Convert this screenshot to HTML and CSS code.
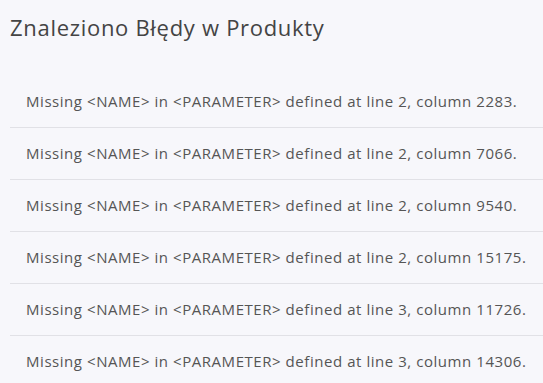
FILE: index.html
```html
<!DOCTYPE html>
<html lang="pl">
<head>
  <meta charset="UTF-8">
  <title>Znaleziono Błędy w Produkty</title>
  <link rel="stylesheet" href="styles.css">
</head>
<body>
  <div class="page">
    <h1 class="title">Znaleziono Błędy w Produkty</h1>
    <ul class="errors">
      <li>Missing &lt;NAME&gt; in &lt;PARAMETER&gt; defined at line 2, column 2283.</li>
      <li>Missing &lt;NAME&gt; in &lt;PARAMETER&gt; defined at line 2, column 7066.</li>
      <li>Missing &lt;NAME&gt; in &lt;PARAMETER&gt; defined at line 2, column 9540.</li>
      <li>Missing &lt;NAME&gt; in &lt;PARAMETER&gt; defined at line 2, column 15175.</li>
      <li>Missing &lt;NAME&gt; in &lt;PARAMETER&gt; defined at line 3, column 11726.</li>
      <li>Missing &lt;NAME&gt; in &lt;PARAMETER&gt; defined at line 3, column 14306.</li>
    </ul>
  </div>
</body>
</html>
```

FILE: styles.css
```css
:root {
  --bg: #f7f7fb;
  --text: #555;
  --title: #444;
  --line: #e1e1e6;
}

* {
  box-sizing: border-box;
}

body {
  margin: 0;
  background: var(--bg);
  font-family: 'Open Sans', 'Liberation Sans', sans-serif;
  color: var(--text);
  overflow: hidden;
}

.page {
  padding: 13px 0 0 10px;
}

.title {
  margin: 0;
  font-size: 22px;
  font-weight: normal;
  line-height: 28px;
  letter-spacing: 0.7px;
  color: var(--title);
}

.errors {
  list-style: none;
  margin: 35px 0 0;
  padding: 0;
}

.errors li {
  padding: 16px;
  font-size: 15px;
  line-height: 19px;
  letter-spacing: 0.55px;
  border-bottom: 1px solid var(--line);
  white-space: nowrap;
}

.errors li:last-child {
  border-bottom: none;
}
```
